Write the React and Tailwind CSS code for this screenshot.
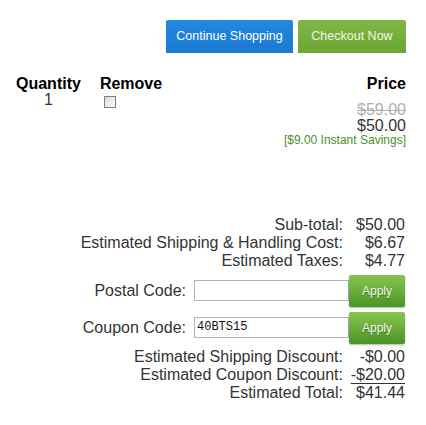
import React from "react";

function ApplyButton() {
  return (
    <button className="w-[56px] h-[32px] rounded-[2px] bg-gradient-to-b from-[#86c44f] via-[#6aae3a] to-[#4a9327] text-[12px] leading-[32px] text-[#f2f9ec] [text-shadow:0_1px_1px_rgba(0,0,0,0.35)] shadow-[0_1px_2px_rgba(0,0,0,0.3)] text-center">
      Apply
    </button>
  );
}

export default function App() {
  return (
    <div className="w-[426px] h-[425px] bg-white font-['Liberation_Sans',Arial,sans-serif] text-[#333] overflow-hidden">
      <div className="flex justify-end gap-[5px] pt-[20px] pr-[20px]">
        <button className="w-[127px] h-[33px] rounded-t-[2px] bg-gradient-to-b from-[#2289de] to-[#1a78d0] text-white text-[12.5px] leading-[33px] text-center">
          Continue Shopping
        </button>
        <button className="w-[108px] h-[33px] rounded-t-[2px] bg-gradient-to-b from-[#80b847] to-[#6ea636] text-[#eef6e6] text-[12.5px] leading-[33px] text-center">
          Checkout Now
        </button>
      </div>

      <div className="flex justify-between pl-[16px] pr-[20px] mt-[22.5px]">
        <div className="flex gap-[19px]">
          <div className="flex flex-col items-center">
            <div className="font-bold text-[16px] leading-[16px] text-black">Quantity</div>
            <div className="text-[16px] leading-[16px]">1</div>
          </div>
          <div className="flex flex-col items-start">
            <div className="font-bold text-[16px] leading-[16px] text-black">Remove</div>
            <span className="block mt-[4px] ml-[4px] w-[12px] h-[12px] border border-[#7e7e7e] bg-gradient-to-br from-[#d9d9d9] to-white"></span>
          </div>
        </div>
        <div className="flex flex-col items-end">
          <div className="font-bold text-[16px] leading-[16px] text-black">Price</div>
          <div className="mt-[10px] text-[16px] leading-[16px] text-[#b0b0b0] line-through">$59.00</div>
          <div className="text-[16px] leading-[16px]">$50.00</div>
          <div className="text-[12px] leading-[12px] text-[#4b8f2f]">[$9.00 Instant Savings]</div>
        </div>
      </div>

      <div className="mt-[70px] flex flex-col items-end pr-[21px] text-[16px] leading-[18px]">
        <div className="grid grid-cols-[auto_55px] gap-x-[7px]">
          <div className="text-right">Sub-total:</div>
          <div className="text-right">$50.00</div>
          <div className="text-right">Estimated Shipping &amp; Handling Cost:</div>
          <div className="text-right">$6.67</div>
          <div className="text-right">Estimated Taxes:</div>
          <div className="text-right">$4.77</div>
        </div>

        <div className="mt-[5px] flex items-center">
          <div className="mr-[8px]">Postal Code:</div>
          <div className="w-[155px] h-[21px] border border-[#a9b5c1] bg-white"></div>
          <ApplyButton />
        </div>

        <div className="mt-[5px] flex items-center">
          <div className="mr-[8px]">Coupon Code:</div>
          <div className="w-[155px] h-[21px] border border-[#a9b5c1] bg-white pl-[2px] font-['Liberation_Mono',monospace] text-[12px] leading-[19px] text-[#111]">
            40BTS15
          </div>
          <ApplyButton />
        </div>

        <div className="mt-[4.5px] grid grid-cols-[auto_55px] gap-x-[7px]">
          <div className="text-right">Estimated Shipping Discount:</div>
          <div className="text-right">-$0.00</div>
          <div className="text-right">Estimated Coupon Discount:</div>
          <div className="text-right underline underline-offset-[3px] decoration-1">-$20.00</div>
          <div className="text-right">Estimated Total:</div>
          <div className="text-right">$41.44</div>
        </div>
      </div>
    </div>
  );
}
